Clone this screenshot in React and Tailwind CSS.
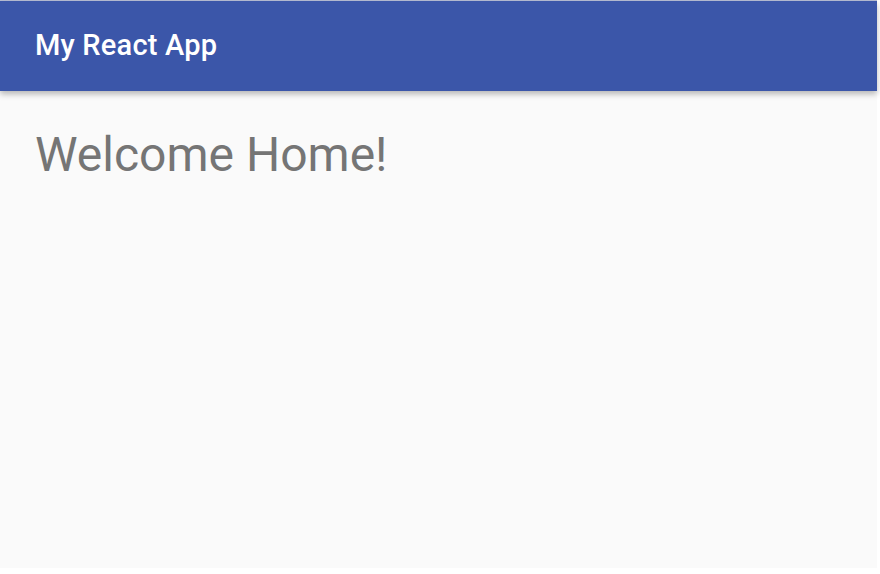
export default function App() {
  return (
    <div className="h-[568px] w-[877px] bg-[#fafafa] border-t border-[#b9bfd6] font-['Roboto',sans-serif]">
      <header className="h-[90px] bg-[#3b56a9] flex items-center px-[35px] shadow-[0_3px_6px_rgba(0,0,0,0.28)] relative">
        <h1 className="text-[29px] font-medium text-white tracking-[0.2px]">My React App</h1>
      </header>
      <main className="px-[35px] pt-[35px]">
        <h2 className="text-[48px] font-normal text-[#757575] leading-[1.2]">Welcome Home!</h2>
      </main>
    </div>
  );
}
